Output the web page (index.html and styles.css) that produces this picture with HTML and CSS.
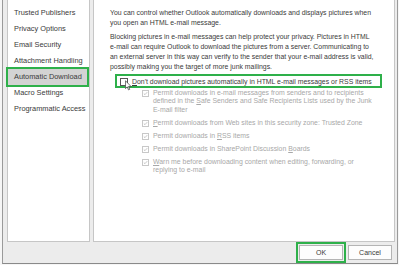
FILE: index.html
```html
<!DOCTYPE html>
<html lang="en">
<head>
    <meta charset="UTF-8">
    <title>Trust Center - Automatic Download</title>
    <link rel="stylesheet" href="styles.css">
</head>
<body>

    <div class="dialog">
        <div class="main">
            <ul class="nav">
                <li>Trusted Publishers</li>
                <li>Privacy Options</li>
                <li>Email Security</li>
                <li>Attachment Handling</li>
                <li class="active">Automatic Download</li>
                <li>Macro Settings</li>
                <li>Programmatic Access</li>
            </ul>

            <div class="content">
                <p class="intro first">You can control whether Outlook automatically downloads and displays pictures when<br>you open an HTML e-mail message.</p>
                <p class="intro">Blocking pictures in e-mail messages can help protect your privacy. Pictures in HTML<br>e-mail can require Outlook to download the pictures from a server. Communicating to<br>an external server in this way can verify to the sender that your e-mail address is valid,<br>possibly making you the target of more junk mailings.</p>

                <label class="option main-option">
                    <span class="box"></span>
                    <span><u>D</u>on't download pictures automatically in HTML e-mail messages or RSS items</span>
                </label>

                <div class="sub-options">
                    <label class="option">
                        <span class="box checked"><svg viewBox="0 0 7 7"><path d="M1.2 3.6 L2.8 5.1 L5.9 1.6" /></svg></span>
                        <span>Permit downloads in e-mail messages from senders and to recipients<br>defined in the <u>S</u>afe Senders and Safe Recipients Lists used by the Junk<br>E-mail filter</span>
                    </label>
                    <label class="option">
                        <span class="box checked"><svg viewBox="0 0 7 7"><path d="M1.2 3.6 L2.8 5.1 L5.9 1.6" /></svg></span>
                        <span><u>P</u>ermit downloads from Web sites in this security zone: Trusted Zone</span>
                    </label>
                    <label class="option">
                        <span class="box checked"><svg viewBox="0 0 7 7"><path d="M1.2 3.6 L2.8 5.1 L5.9 1.6" /></svg></span>
                        <span>Permit downloads in <u>R</u>SS items</span>
                    </label>
                    <label class="option">
                        <span class="box checked"><svg viewBox="0 0 7 7"><path d="M1.2 3.6 L2.8 5.1 L5.9 1.6" /></svg></span>
                        <span>Permit downloads in SharePoint Discussion <u>B</u>oards</span>
                    </label>
                    <label class="option">
                        <span class="box checked"><svg viewBox="0 0 7 7"><path d="M1.2 3.6 L2.8 5.1 L5.9 1.6" /></svg></span>
                        <span><u>W</u>arn me before downloading content when editing, forwarding, or<br>replying to e-mail</span>
                    </label>
                </div>

                <!-- mouse pointer over the checkbox -->
                <svg class="cursor" viewBox="0 0 8 12">
                    <path d="M0.5 0.5 L0.5 9.5 L2.6 7.6 L4 11 L5.4 10.4 L4 7.2 L7 7.2 Z" />
                </svg>
            </div>
        </div>

        <div class="footer">
            <button class="btn highlighted">OK</button>
            <button class="btn">Cancel</button>
        </div>
    </div>

</body>
</html>
```

FILE: styles.css
```css
body {
    margin: 0;
    padding: 0;
    background-color: #f6f6f6;
    font-family: "Liberation Sans", Arial, sans-serif;
    color: #3a3a3a;
}

.dialog {
    width: 394px;
    height: 263px;
    margin-left: 2px;
    border-left: 1px solid #9a9a9a;
    border-right: 1px solid #9a9a9a;
    border-bottom: 1px solid #8a8a8a;
    background-color: #ececec;
    display: flex;
    flex-direction: column;
}

.main {
    display: flex;
    gap: 3px;
    height: 242px;
    padding-left: 4px;
    padding-right: 2px;
}

.nav {
    width: 81px;
    margin: 0;
    padding: 5px 0 0 0;
    list-style: none;
    background-color: white;
    border: 1px solid #c6c6c6;
    border-top: none;
    font-size: 7.4px;
}

.nav li {
    height: 16px;
    line-height: 16px;
    padding-left: 6px;
    white-space: nowrap;
}

.nav li.active {
    background-color: #d3d3d3;
    margin-right: 2px;
    outline: 2px solid #2eb04a;
}

.content {
    flex: 1;
    position: relative;
    background-color: white;
    border: 1px solid #c6c6c6;
    border-top: none;
    padding-left: 16px;
    font-size: 6.9px;
    white-space: nowrap;
}

.intro {
    margin: 0 0 3px 0;
    line-height: 10.3px;
}

.intro.first {
    margin-top: 8px;
}

.option {
    display: flex;
    align-items: flex-start;
}

.box {
    width: 6px;
    height: 6px;
    border: 1px solid #555555;
    background-color: white;
    flex-shrink: 0;
}

.main-option {
    margin: 1px 0 0 7px;
    width: 260px;
    height: 9px;
    padding: 1px 0 0 3px;
    outline: 2px solid #2eb04a;
    line-height: 9px;
}

.main-option .box {
    margin: 1px 4px 0 0;
}

.sub-options {
    margin-top: 3px;
    padding-left: 32px;
    color: #a8a8a8;
}

.sub-options .option {
    line-height: 8.4px;
    margin-bottom: 4.6px;
}

.sub-options .box {
    width: 5px;
    height: 5px;
    border-color: #c8c8c8;
    margin: 1px 4px 0 0;
}

.box svg {
    display: block;
    width: 5px;
    height: 5px;
    fill: none;
    stroke: #a8a8a8;
    stroke-width: 0.9;
}

.cursor {
    position: absolute;
    left: 31px;
    top: 80px;
    width: 7px;
    height: 11px;
    fill: white;
    stroke: #3a3a3a;
    stroke-width: 0.8;
}

.footer {
    flex: 1;
    display: flex;
    justify-content: flex-end;
    align-items: center;
    gap: 5px;
    padding-right: 5px;
}

.btn {
    width: 44px;
    height: 15px;
    padding: 0;
    font-family: inherit;
    font-size: 7px;
    color: #3a3a3a;
    background-color: #fdfdfd;
    border: 1px solid #b4b4b4;
}

.btn.highlighted {
    outline: 2px solid #2eb04a;
    outline-offset: 1px;
}
```
